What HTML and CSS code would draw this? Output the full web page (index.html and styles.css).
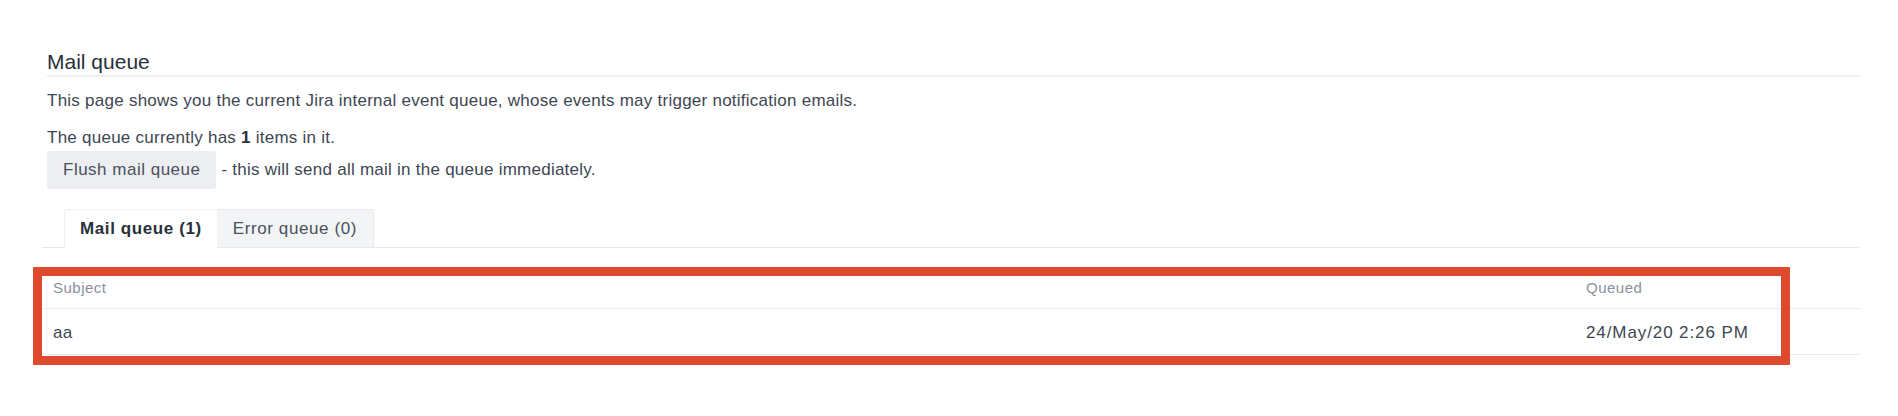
FILE: index.html
```html
<!DOCTYPE html>
<html lang="en">
<head>
<meta charset="utf-8">
<title>Mail queue</title>
<link rel="stylesheet" href="styles.css">
</head>
<body>
<div class="page">
  <h1 class="title">Mail queue</h1>
  <p class="para first">This page shows you the current Jira internal event queue, whose events may trigger notification emails.</p>
  <p class="para second">The queue currently has <strong>1</strong> items in it.</p>
  <div class="flush-row">
    <button class="btn" type="button">Flush mail queue</button>
    <span class="flush-note">- this will send all mail in the queue immediately.</span>
  </div>
  <div class="tabs">
    <div class="tab active">Mail queue (1)</div>
    <div class="tab">Error queue (0)</div>
  </div>
  <div class="table">
    <div class="row head">
      <div class="cell subject">Subject</div>
      <div class="cell queued">Queued</div>
    </div>
    <div class="row body">
      <div class="cell subject">aa</div>
      <div class="cell queued date">24/May/20 2:26 PM</div>
    </div>
  </div>
  <div class="highlight"></div>
</div>
</body>
</html>
```

FILE: styles.css
```css
html, body {
  margin: 0;
  padding: 0;
  background: #ffffff;
}

body {
  font-family: "Liberation Sans", Arial, sans-serif;
  color: #3e4652;
  min-height: 416px;
}

.page {
  position: relative;
  box-sizing: border-box;
  min-height: 416px;
  padding: 50px 38px 0 47px;
}

.title {
  margin: 0;
  font-size: 21px;
  line-height: 24px;
  font-weight: normal;
  color: #27303b;
  padding-bottom: 1px;
  border-bottom: 2px solid #eef0f2;
}

.para {
  margin: 0;
  font-size: 17px;
  line-height: 20px;
  letter-spacing: 0.25px;
}

.para.first {
  margin-top: 14px;
}

.para.second {
  margin-top: 17px;
}

.para strong {
  font-weight: bold;
  color: #2a313a;
}

.flush-row {
  display: flex;
  align-items: center;
  gap: 5px;
  margin-top: 3px;
  font-size: 17px;
  letter-spacing: 0.25px;
}

.btn {
  font: inherit;
  letter-spacing: 0.5px;
  color: #4a515c;
  background: #eceef1;
  border: none;
  border-radius: 3px;
  padding: 9px 16px;
  line-height: 20px;
  height: 38px;
}

.flush-note {
  line-height: 20px;
}

.tabs {
  display: flex;
  margin: 20px 0 0 -5px;
  padding-left: 22px;
  border-bottom: 1px solid #e6e8eb;
  font-size: 17px;
  letter-spacing: 0.6px;
}

.tab {
  line-height: 20px;
  padding: 9px 16px 8px 16px;
  background: #f3f4f6;
  border: 1px solid #e6e8eb;
  border-bottom: none;
  border-left: none;
  border-radius: 0 3px 0 0;
  color: #4a515c;
}

.tab.active {
  background: #ffffff;
  font-weight: bold;
  color: #27303b;
  padding: 9px 15px 9px 15px;
  border-left: 1px solid #eef0f2;
  border-top: 1px solid #eef0f2;
  border-right: none;
  border-radius: 3px 0 0 0;
  margin-bottom: -1px;
}

.table {
  margin: 20px 0 0 -4px;
}

.row {
  display: grid;
  grid-template-columns: 1fr 284px;
  border-bottom: 1px solid #e8eaed;
}

.cell {
  padding-left: 10px;
}

.row.head .cell {
  font-size: 15px;
  line-height: 18px;
  letter-spacing: 0.5px;
  color: #8a90a0;
  padding-top: 11px;
  padding-bottom: 11px;
}

.row.body .cell {
  font-size: 17px;
  line-height: 20px;
  letter-spacing: 0.4px;
  color: #3e4652;
  padding-top: 14px;
  padding-bottom: 11px;
}

.row.body .cell.date {
  letter-spacing: 0.9px;
}

.highlight {
  position: absolute;
  box-sizing: border-box;
  left: 33px;
  top: 267px;
  width: 1757px;
  height: 98px;
  border: 9px solid #df4a2f;
  border-radius: 1px;
  pointer-events: none;
}
```
